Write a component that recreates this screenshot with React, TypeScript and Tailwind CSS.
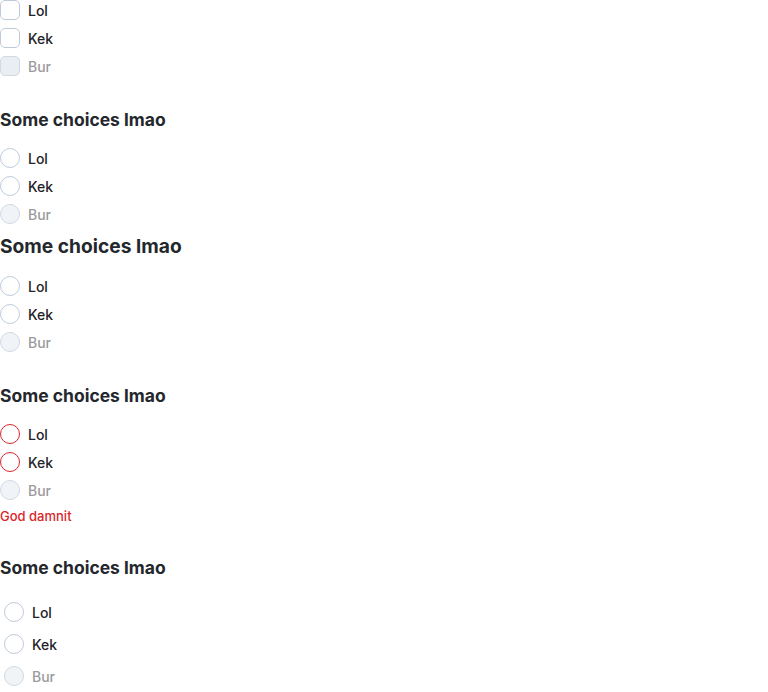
type Option = { label: string; disabled?: boolean };

const options: Option[] = [
  { label: "Lol" },
  { label: "Kek" },
  { label: "Bur", disabled: true },
];

const CheckRow = ({ opt }: { opt: Option }) => (
  <label className="flex items-center gap-2 h-5">
    <span
      className={`w-5 h-5 rounded-[5px] border ${
        opt.disabled ? "bg-[#e9eef3] border-[#d0d9e4]" : "bg-white border-[#bfcbda]"
      }`}
    />
    <span className={`text-[14px] font-medium ${opt.disabled ? "text-[#9a9b9d]" : "text-[#1f2328]"}`}>
      {opt.label}
    </span>
  </label>
);

const RadioRow = ({ opt, error }: { opt: Option; error?: boolean }) => (
  <label className="flex items-center gap-2 h-5">
    <span
      className={`w-5 h-5 rounded-full border ${
        opt.disabled
          ? "bg-[#f1f4f7] border-[#d0d9e4]"
          : error
          ? "bg-white border-[#d9262b]"
          : "bg-white border-[#bfcbda]"
      }`}
    />
    <span className={`text-[14px] font-medium ${opt.disabled ? "text-[#9a9b9d]" : "text-[#1f2328]"}`}>
      {opt.label}
    </span>
  </label>
);

const Heading = ({ big }: { big?: boolean }) => (
  <h3
    className={`font-bold text-[#24272c] ${
      big
        ? "text-[19.2px] leading-[28px] pt-px -mb-px"
        : "text-[17.5px] leading-[24px] pt-px -mb-px"
    }`}
  >
    Some choices lmao
  </h3>
);

export default function App() {
  return (
    <div className="bg-white min-h-[692px] font-['Inter','Noto_Sans',sans-serif]">
      <div className="flex flex-col gap-2">
        {options.map((o) => (
          <CheckRow key={o.label} opt={o} />
        ))}
      </div>

      <div className="mt-[31px]">
        <Heading />
        <div className="flex flex-col gap-2 mt-[17px]">
          {options.map((o) => (
            <RadioRow key={o.label} opt={o} />
          ))}
        </div>
      </div>

      <div className="mt-[7px]">
        <Heading big />
        <div className="flex flex-col gap-2 mt-[17px]">
          {options.map((o) => (
            <RadioRow key={o.label} opt={o} />
          ))}
        </div>
      </div>

      <div className="mt-[31px]">
        <Heading />
        <div className="flex flex-col gap-2 mt-[17px]">
          {options.map((o) => (
            <RadioRow key={o.label} opt={o} error={!o.disabled} />
          ))}
        </div>
        <p className="mt-2 text-[13px] leading-4 font-medium text-[#d9262b]">God damnit</p>
      </div>

      <div className="mt-[31px]">
        <Heading />
        <div className="flex flex-col gap-1 mt-[19px]">
          {options.map((o) => (
            <div key={o.label} className="p-1">
              <RadioRow opt={o} />
            </div>
          ))}
        </div>
      </div>
    </div>
  );
}
